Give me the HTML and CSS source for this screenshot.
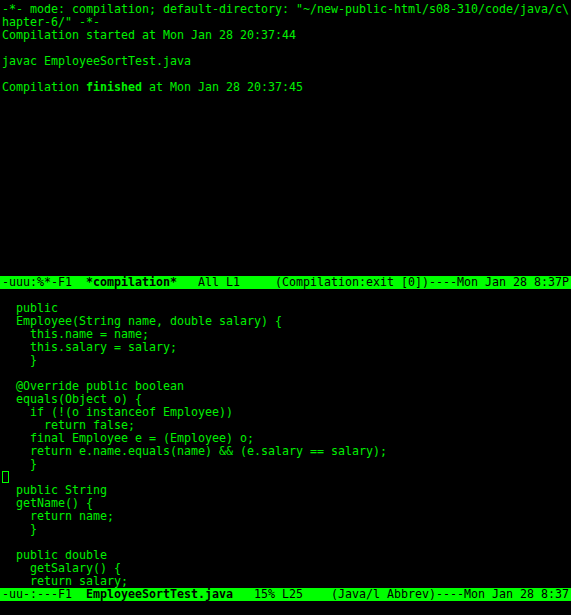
FILE: index.html
```html
<!DOCTYPE html>
<html>
<head>
<meta charset="utf-8">
<title>emacs - compilation</title>
<link rel="stylesheet" href="styles.css">
</head>
<body>
<div class="frame">
  <div class="window top">
    <pre class="buffer">-*- mode: compilation; default-directory: "~/new-public-html/s08-310/code/java/c\
hapter-6/" -*-
Compilation started at Mon Jan 28 20:37:44

javac EmployeeSortTest.java

Compilation <b>finished</b> at Mon Jan 28 20:37:45</pre>
  </div>
  <pre class="modeline">-uuu:%*-F1  <b>*compilation*</b>   All L1     (Compilation:exit [0])----Mon Jan 28 8:37P</pre>
  <div class="window bottom">
    <pre class="buffer">

  public
  Employee(String name, double salary) {
    this.name = name;
    this.salary = salary;
    }

  @Override public boolean
  equals(Object o) {
    if (!(o instanceof Employee))
      return false;
    final Employee e = (Employee) o;
    return e.name.equals(name) &amp;&amp; (e.salary == salary);
    }
<span class="cursor"> </span>
  public String
  getName() {
    return name;
    }

  public double
    getSalary() {
    return salary;</pre>
  </div>
  <pre class="modeline">-uu-:---F1  <b>EmployeeSortTest.java</b>   15% L25    (Java/l Abbrev)----Mon Jan 28 8:37</pre>
</div>
</body>
</html>
```

FILE: styles.css
```css
html, body { margin: 0; padding: 0; background: #000; }
body { font: 11.63px/13px "DejaVu Sans Mono", "Liberation Mono", monospace; color: #00f000; }
.frame { display: flex; flex-direction: column; padding-top: 3px; width: 571px; height: 612px; overflow: hidden; }
pre { margin: 0; font: inherit; white-space: pre; }
.buffer { padding-left: 2px; }
b { font-weight: bold; }
.window.top { height: 273px; }
.window.bottom { height: 299px; }
.modeline { height: 13px; padding-left: 2px; background: #00ff00; color: #000; }
.cursor { display: inline-block; width: 5px; height: 10px; border: 1px solid #00ff00; vertical-align: top; }
```
